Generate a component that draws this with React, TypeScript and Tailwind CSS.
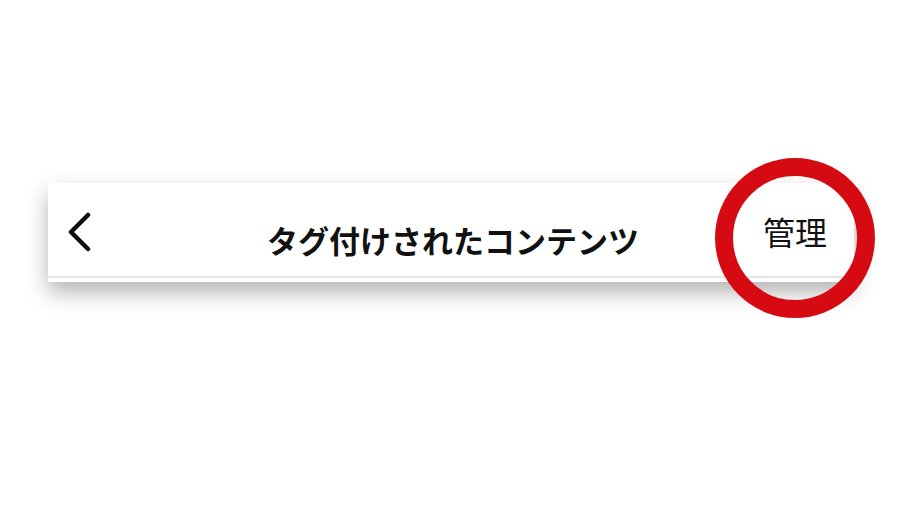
import React from 'react';

const App: React.FC = () => {
  return (
    <div
      className="relative w-[900px] h-[512px] bg-white overflow-hidden pt-[183px] pl-[48px]"
      style={{ fontFamily: '"Noto Sans CJK JP", "Noto Sans", sans-serif' }}
    >
      <div className="w-[806px] h-[99px] bg-white shadow-[0_10px_20px_rgba(0,0,0,0.3)] flex flex-col">
        <div className="h-[95px] border-b-2 border-[#e6e6e6] flex items-center relative">
          <div className="w-[110px] flex items-center pl-[17px] pt-[4px]">
            <svg width="30" height="40" viewBox="0 0 30 40" fill="none">
              <path d="M23 3 L6 20 L23 37" stroke="#111" strokeWidth="4.5" strokeLinecap="round" strokeLinejoin="round" />
            </svg>
          </div>
          <div className="flex-1 text-center text-[31px] font-bold text-[#111] leading-none pt-[20px] pl-[4px]">
            タグ付けされたコンテンツ
          </div>
          <div className="w-[110px] text-[32px] text-[#111] leading-none pl-[19px] pt-[2px]">
            管理
          </div>
        </div>
      </div>
      <div className="absolute left-[715px] top-[158px] w-[160px] h-[160px] rounded-full border-[18px] border-[#d60a12]" />
    </div>
  );
};

export default App;
